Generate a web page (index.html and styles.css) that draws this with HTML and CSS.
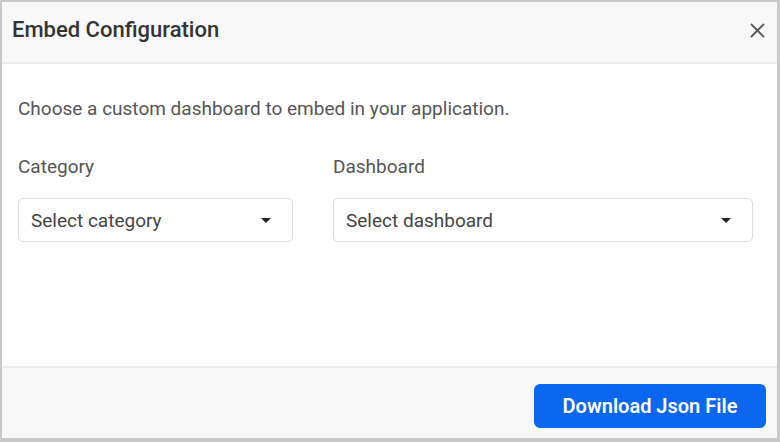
FILE: index.html
```html
<!DOCTYPE html>
<html>
<head>
<meta charset="utf-8">
<link rel="stylesheet" href="styles.css">
</head>
<body>
<div class="dialog">
  <div class="header">
    <div class="title">Embed Configuration</div>
    <svg class="close" width="15" height="15" viewBox="0 0 15 15"><path d="M1 1L14 14M14 1L1 14" stroke="#5a5a5a" stroke-width="1.9" fill="none"/></svg>
  </div>
  <div class="content">
    <p class="intro">Choose a custom dashboard to embed in your application.</p>
    <div class="fields">
      <div class="field f-cat">
        <div class="label">Category</div>
        <div class="select"><span>Select category</span><span class="caret"></span></div>
      </div>
      <div class="field f-dash">
        <div class="label">Dashboard</div>
        <div class="select"><span>Select dashboard</span><span class="caret"></span></div>
      </div>
    </div>
  </div>
  <div class="footer">
    <button class="btn">Download Json File</button>
  </div>
</div>
</body>
</html>
```

FILE: styles.css
```css
html, body { margin: 0; padding: 0; }
body { width: 780px; height: 442px; background: #fff; font-family: Roboto, "Liberation Sans", sans-serif; }
.dialog {
  box-sizing: border-box;
  width: 780px; height: 442px;
  border: 2px solid #c8c8c8;
  border-right-width: 3px;
  border-bottom-width: 4px;
  display: flex; flex-direction: column;
  background: #fff;
}
.header {
  height: 60px;
  background: #f8f8f8;
  border-bottom: 2px solid #ececec;
  display: flex; align-items: center; justify-content: space-between;
  padding: 0 12px 0 10px;
  flex: none;
}
.title { font-size: 22px; font-weight: 500; color: #333; margin-top: -6px; }
.close { margin-top: -4px; }
.content { flex: 1; padding: 0 16px; }
.intro { margin: 34px 0 0; font-size: 19px; color: #555; line-height: 22px; }
.fields { display: flex; gap: 40px; margin-top: 36px; }
.f-cat { width: 275px; }
.f-dash { width: 420px; }
.label { font-size: 19px; color: #555; line-height: 22px; }
.select {
  margin-top: 20px;
  box-sizing: border-box;
  height: 44px;
  border: 1px solid #dcdcdc;
  border-radius: 5px;
  display: flex; align-items: center; justify-content: space-between;
  padding: 0 21px 0 12px;
  font-size: 19px; color: #444;
}
.caret {
  width: 0; height: 0;
  border-left: 5px solid transparent;
  border-right: 5px solid transparent;
  border-top: 5px solid #222;
}
.footer {
  flex: none;
  background: #f8f8f8;
  border-top: 2px solid #ececec;
  display: flex; justify-content: flex-end; align-items: flex-start;
  padding: 16px 11px 0 0;
  box-sizing: border-box;
  height: 72px;
}
.btn {
  width: 232px; height: 44px;
  background: #0b67f0;
  border: none;
  border-radius: 6px;
  color: #fff;
  font-family: Roboto, "Liberation Sans", sans-serif;
  font-weight: 600;
  font-size: 20px;
}
```
